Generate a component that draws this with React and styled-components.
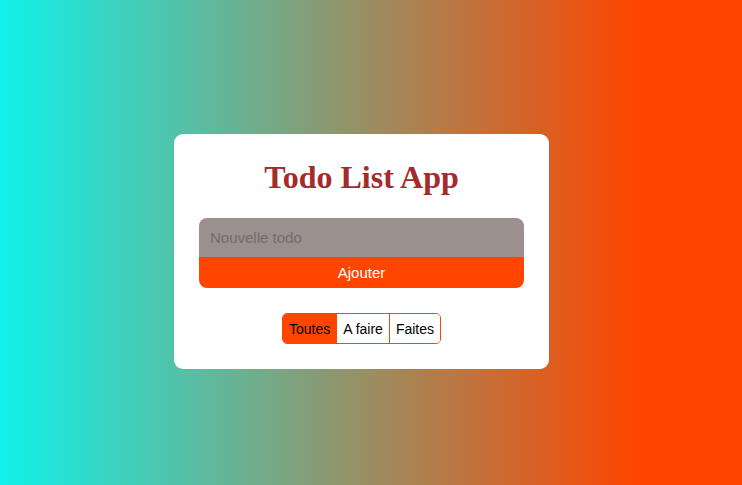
import React, { useState } from "react";
import styled, { createGlobalStyle } from "styled-components";

const GlobalStyle = createGlobalStyle`
  html, body {
    margin: 0;
    padding: 0;
  }
  body {
    font-family: "Liberation Sans", Arial, sans-serif;
  }
`;

const Page = styled.div`
  display: flex;
  align-items: center;
  justify-content: center;
  width: 100%;
  min-height: 100vh;
  box-sizing: border-box;
  padding: 18px 19px 0 0;
  background: linear-gradient(to right, #10f2ea 0%, #ff4500 86%);
`;

const Card = styled.div`
  width: 375px;
  box-sizing: border-box;
  padding: 25px;
  background: #fff;
  border-radius: 9px;
  display: flex;
  flex-direction: column;
  align-items: center;
`;

const Title = styled.h1`
  margin: 0 0 22px;
  font-family: "Liberation Serif", "Times New Roman", serif;
  font-size: 32px;
  font-weight: bold;
  color: #a52a2a;
`;

const Form = styled.form`
  width: 100%;
  display: flex;
  flex-direction: column;
  border-radius: 8px;
  overflow: hidden;
`;

const Input = styled.input`
  height: 39px;
  box-sizing: border-box;
  border: none;
  outline: none;
  padding: 0 11px;
  background: #9b908e;
  font-family: "Liberation Sans", Arial, sans-serif;
  font-size: 15px;
  color: #333;

  &::placeholder {
    color: #6e6e6e;
  }
`;

const AddButton = styled.button`
  height: 31px;
  border: none;
  background: #ff4500;
  color: #fff;
  font-family: "Liberation Sans", Arial, sans-serif;
  font-size: 15px;
  cursor: pointer;
`;

const Filters = styled.div`
  display: flex;
  margin-top: 25px;
  border: 1px solid #ff4500;
  border-radius: 5px;
  overflow: hidden;
`;

const FilterButton = styled.button`
  height: 29px;
  padding: 0 6px;
  border: none;
  border-left: ${(p) => (p.$first ? "none" : "1px solid #ff4500")};
  background: ${(p) => (p.$active ? "#ff4500" : "#fff")};
  color: #000;
  font-family: "Liberation Sans", Arial, sans-serif;
  font-size: 14px;
  cursor: pointer;
`;

const filters = ["Toutes", "A faire", "Faites"];

export default function App() {
  const [active, setActive] = useState("Toutes");

  return (
    <>
      <GlobalStyle />
      <Page>
        <Card>
          <Title>Todo List App</Title>
          <Form onSubmit={(e) => e.preventDefault()}>
            <Input placeholder="Nouvelle todo" />
            <AddButton type="submit">Ajouter</AddButton>
          </Form>
          <Filters>
            {filters.map((f, i) => (
              <FilterButton
                key={f}
                $first={i === 0}
                $active={active === f}
                onClick={() => setActive(f)}
              >
                {f}
              </FilterButton>
            ))}
          </Filters>
        </Card>
      </Page>
    </>
  );
}
